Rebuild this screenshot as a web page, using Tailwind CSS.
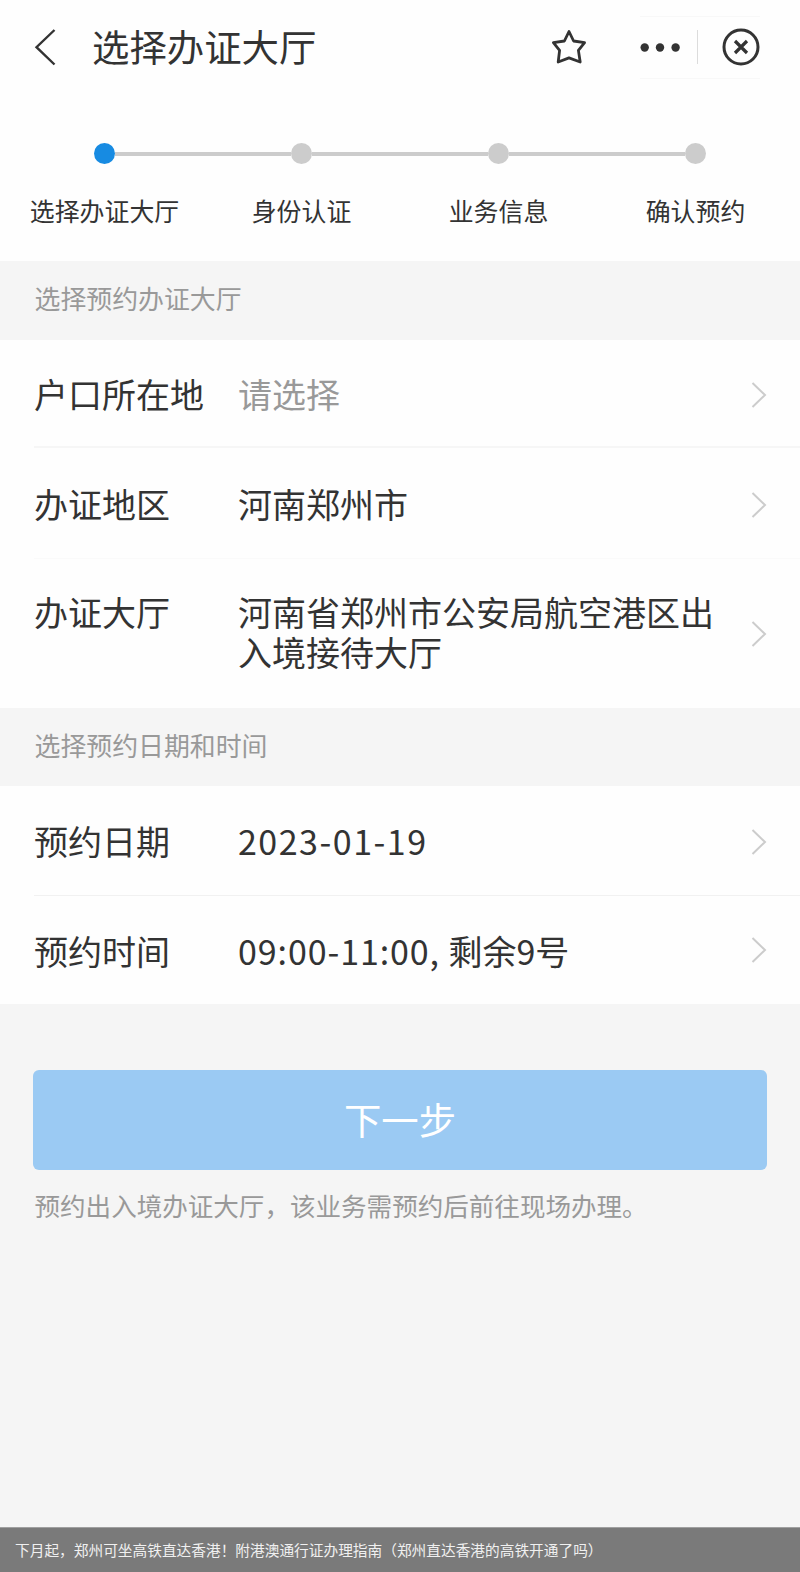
<!DOCTYPE html>
<html lang="zh-CN">
<head>
  <meta charset="UTF-8" />
  <meta name="viewport" content="width=device-width, initial-scale=1.0" />
  <title>选择办证大厅</title>
  <script src="https://cdn.jsdelivr.net/npm/@tailwindcss/browser@4"></script>
</head>
<body class="bg-[#f5f5f5] text-[#333] font-['Noto_Sans_CJK_SC',sans-serif]">
  <div class="w-[800px] h-[1572px] flex flex-col overflow-hidden">

    <!-- Header -->
    <header class="h-[94px] shrink-0 bg-[#fefefe] flex items-center pl-[34px] pr-[40px]">
      <svg class="w-[22px] h-[38px] shrink-0" viewBox="0 0 22 38" fill="none" stroke="#333" stroke-width="2.4"><path d="M20.5 2 2.5 19.2 20.5 36.5" /></svg>
      <h1 class="ml-[36px] text-[37.4px] leading-[40px] pb-[2px]">选择办证大厅</h1>
      <svg class="ml-auto w-[36px] h-[36px] shrink-0" viewBox="0 0 36 36" fill="none" stroke="#333" stroke-width="2.8" stroke-linejoin="round"><path d="M18 2.5 22.6 12 33.6 13.7 27.4 21.4 29.2 33 18 28.9 7.2 33 8.6 21.4 2.4 13.7 13.4 12Z" /></svg>
      <div class="ml-[53px] w-[120px] h-[63px] border-y border-[#f8f8f8] flex items-center">
        <svg class="w-[40px] h-[9px]" viewBox="0 0 40 9" fill="#333"><circle cx="4.7" cy="4.5" r="4.2" /><circle cx="20" cy="4.5" r="4.2" /><circle cx="35.6" cy="4.5" r="4.2" /></svg>
        <div class="ml-[17px] w-px h-[34px] bg-[#dcdcdc]"></div>
        <svg class="ml-auto w-[38px] h-[38px]" viewBox="0 0 38 38" fill="none" stroke="#333" stroke-width="3"><circle cx="19" cy="19" r="17" /><path d="M13 13 25 25M25 13 13 25" stroke-width="3.2" /></svg>
      </div>
    </header>

    <!-- Steps -->
    <section class="h-[167px] shrink-0 bg-[#fefefe] pt-[49px]">
      <div class="flex items-center pl-[94px] pr-[94px]">
        <span class="size-[21px] rounded-full bg-[#178be2]"></span>
        <span class="flex-1 h-[4px] bg-[#ccc]"></span>
        <span class="size-[21px] rounded-full bg-[#ccc]"></span>
        <span class="flex-1 h-[4px] bg-[#ccc]"></span>
        <span class="size-[21px] rounded-full bg-[#ccc]"></span>
        <span class="flex-1 h-[4px] bg-[#ccc]"></span>
        <span class="size-[21px] rounded-full bg-[#ccc]"></span>
      </div>
      <div class="mt-[29px] px-[6px] grid grid-cols-4 text-center text-[24.9px] leading-[34px]">
        <span>选择办证大厅</span>
        <span>身份认证</span>
        <span>业务信息</span>
        <span>确认预约</span>
      </div>
    </section>

    <!-- Hall -->
    <h2 class="h-[79px] shrink-0 flex items-center pl-[34.5px] pb-[4px] text-[25.9px] text-[#999]">选择预约办证大厅</h2>
    <section class="shrink-0 bg-[#fefefe] text-[34px] leading-[39px]">
      <div class="h-[108px] ml-[34px] pr-[33px] flex items-center border-b-2 border-[#f6f6f6]">
        <span class="w-[204px]">户口所在地</span>
        <span class="flex-1 text-[#999]">请选择</span>
        <svg class="w-[16px] h-[28px] mt-[3px]" viewBox="0 0 16 28" fill="none" stroke="#ccc" stroke-width="2"><path d="M1.5 2 14 14 1.5 26" /></svg>
      </div>
      <div class="h-[111px] ml-[34px] pr-[33px] flex items-center border-b border-[#fafafa]">
        <span class="w-[204px]">办证地区</span>
        <span class="flex-1">河南郑州市</span>
        <svg class="w-[16px] h-[28px] mt-[3px]" viewBox="0 0 16 28" fill="none" stroke="#ccc" stroke-width="2"><path d="M1.5 2 14 14 1.5 26" /></svg>
      </div>
      <div class="h-[149px] ml-[34px] pr-[33px] flex items-center">
        <span class="w-[204px] self-start pt-[33px]">办证大厅</span>
        <div class="flex-1 self-start pt-[33px] flex flex-col gap-px">
          <span>河南省郑州市公安局航空港区出</span>
          <span>入境接待大厅</span>
        </div>
        <svg class="w-[16px] h-[28px]" viewBox="0 0 16 28" fill="none" stroke="#ccc" stroke-width="2"><path d="M1.5 2 14 14 1.5 26" /></svg>
      </div>
    </section>

    <!-- Date and time -->
    <h2 class="h-[78px] shrink-0 flex items-center pl-[34.5px] pb-[3px] text-[25.9px] text-[#999]">选择预约日期和时间</h2>
    <section class="shrink-0 bg-[#fefefe] text-[34px] leading-[39px]">
      <div class="h-[110px] ml-[34px] pr-[33px] flex items-center border-b border-[#f1f1f1]">
        <span class="w-[204px]">预约日期</span>
        <span class="flex-1 tracking-[1.5px]">2023-01-19</span>
        <svg class="w-[16px] h-[28px] mt-[2px]" viewBox="0 0 16 28" fill="none" stroke="#ccc" stroke-width="2"><path d="M1.5 2 14 14 1.5 26" /></svg>
      </div>
      <div class="h-[108px] ml-[34px] pr-[33px] flex items-center">
        <span class="w-[204px]">预约时间</span>
        <span class="flex-1"><span class="tracking-[0.9px]">09:00-11:00, </span>剩余9号</span>
        <svg class="w-[16px] h-[28px]" viewBox="0 0 16 28" fill="none" stroke="#ccc" stroke-width="2"><path d="M1.5 2 14 14 1.5 26" /></svg>
      </div>
    </section>

    <!-- Submit -->
    <section class="flex-1 px-[33px] pt-[66px]">
      <button class="w-full h-[100px] rounded-[6px] bg-[#9bcaf3] text-white text-[37.4px] leading-[40px] pb-[3px]">下一步</button>
      <p class="mt-[18px] pl-[1.5px] text-[25.55px] leading-[34px] text-[#999] whitespace-nowrap">预约出入境办证大厅，该业务需预约后前往现场办理。</p>
    </section>

    <footer class="h-[45px] shrink-0 bg-[#7a7a7a] border-t border-[#a0a0a0] flex items-center pl-[15px] text-[14.7px] text-[#f0f0f0] whitespace-nowrap">下月起，郑州可坐高铁直达香港！附港澳通行证办理指南（郑州直达香港的高铁开通了吗）</footer>
  </div>
</body>
</html>
